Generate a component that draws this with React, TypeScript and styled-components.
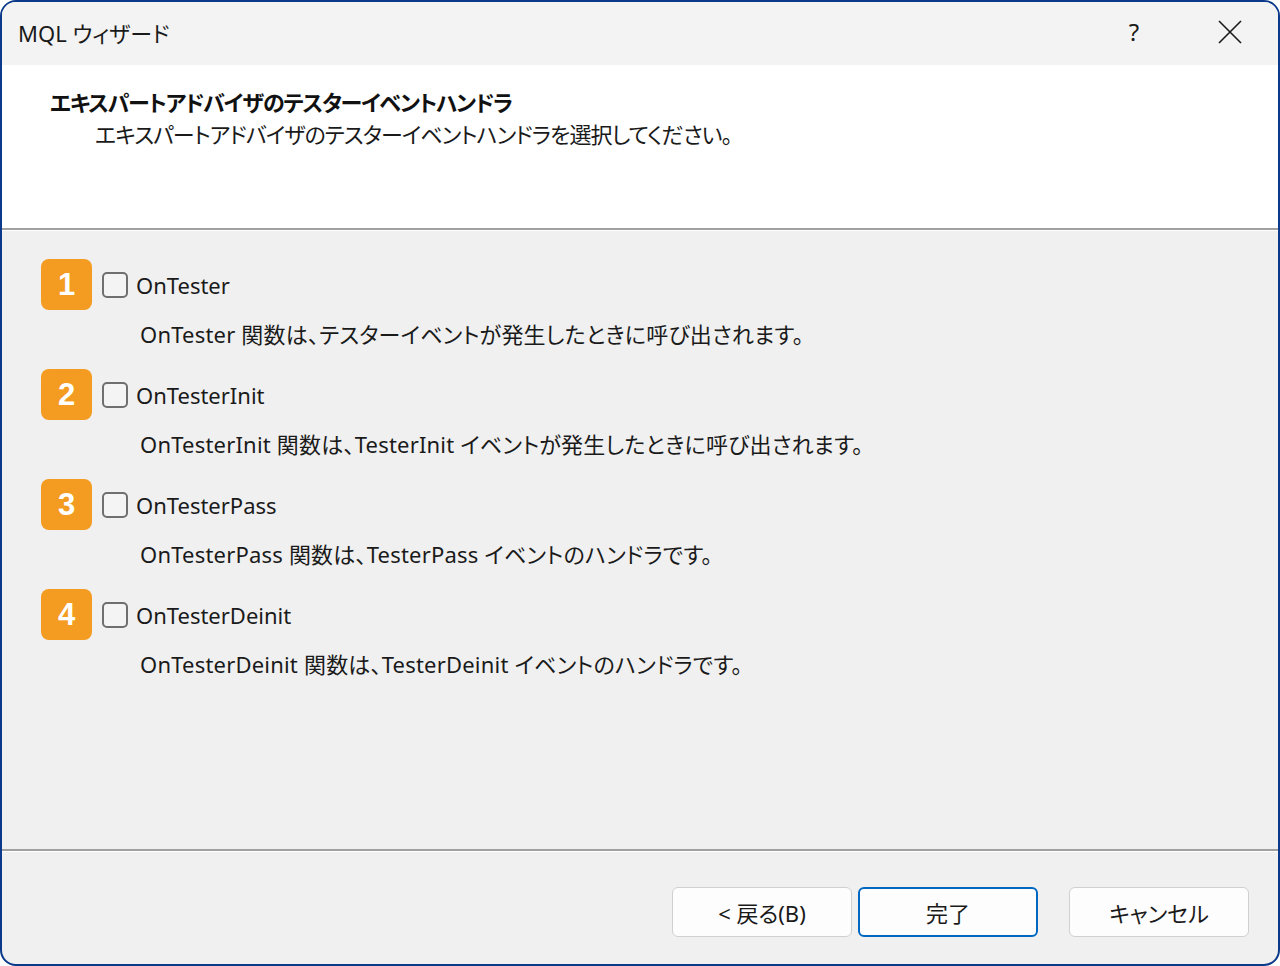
import React from 'react';
import styled, { createGlobalStyle } from 'styled-components';

const GlobalStyle = createGlobalStyle`
  html, body {
    margin: 0;
    padding: 0;
    background: #ffffff;
  }
  * {
    box-sizing: border-box;
  }
`;

const FONT = `"Noto Sans", "Noto Sans CJK JP", sans-serif`;

const Window = styled.div`
  width: 1280px;
  height: 966px;
  border: 2px solid #0c3a8a;
  border-radius: 16px;
  overflow: hidden;
  background: #f0f0f0;
  display: flex;
  flex-direction: column;
  font-family: ${FONT};
  font-feature-settings: 'palt';
  color: #1a1a1a;
`;

const TitleBar = styled.div`
  height: 63px;
  flex: none;
  background: #f3f3f3;
  display: flex;
  align-items: center;
  padding-left: 16px;
`;

const TitleText = styled.div`
  flex: 1;
  font-size: 22px;
  padding-bottom: 4px;
`;

const TitleButton = styled.button`
  width: 96px;
  height: 63px;
  border: none;
  background: transparent;
  padding: 0 0 4px;
  display: flex;
  align-items: center;
  justify-content: center;
  font-family: ${FONT};
  font-size: 24px;
  color: #1a1a1a;
  cursor: default;
`;

const Header = styled.div`
  height: 163px;
  flex: none;
  background: #ffffff;
  padding: 22px 0 0 48px;
`;

const HeaderTitle = styled.div`
  font-size: 22px;
  font-weight: 700;
  line-height: 30px;
  letter-spacing: -1.2px;
  color: #111;
`;

const HeaderSub = styled.div`
  font-size: 22px;
  line-height: 30px;
  letter-spacing: -0.9px;
  padding-left: 45px;
  margin-top: 2px;
`;

const Divider = styled.div`
  flex: none;
  height: 3px;
  border-top: 2px solid #a0a0a0;
  border-bottom: 1px solid #ffffff;
`;

const Body = styled.div`
  flex: 1;
  padding: 28px 0 0 39px;
  display: flex;
  flex-direction: column;
`;

const Item = styled.div`
  display: flex;
  flex-direction: column;
  height: 110px;
`;

const ItemRow = styled.div`
  display: flex;
  align-items: center;
  height: 51px;
`;

const Badge = styled.div`
  width: 51px;
  height: 51px;
  border-radius: 8px;
  background: #f49c21;
  color: #ffffff;
  font-family: "Liberation Sans", Arial, sans-serif;
  font-weight: 700;
  font-size: 31px;
  display: flex;
  align-items: center;
  justify-content: center;
`;

const CheckBox = styled.span`
  width: 26px;
  height: 26px;
  margin-left: 10px;
  border: 2px solid #6f6f6f;
  border-radius: 5px;
  background: #f4f4f4;
`;

const Label = styled.span`
  margin-left: 8px;
  font-size: 22px;
`;

const Description = styled.div`
  padding-left: 99px;
  margin-top: 9px;
  font-size: 22px;
  line-height: 30px;
  letter-spacing: 0.2px;
`;

const Footer = styled.div`
  height: 112px;
  flex: none;
  display: flex;
  align-items: flex-start;
  padding: 35px 0 0 670px;
`;

const Button = styled.button<{ $primary?: boolean; $gap?: number }>`
  width: 180px;
  height: 50px;
  margin-left: ${(p) => p.$gap ?? 0}px;
  border-radius: 6px;
  border: ${(p) => (p.$primary ? '2px solid #0067c0' : '1px solid #d0d0d0')};
  background: #fdfdfd;
  font-family: ${FONT};
  font-feature-settings: 'palt';
  font-size: 22px;
  color: #1a1a1a;
  display: flex;
  align-items: center;
  justify-content: center;
  padding: 0;
`;

const items = [
  {
    n: 1,
    name: 'OnTester',
    desc: 'OnTester 関数は、テスターイベントが発生したときに呼び出されます。',
  },
  {
    n: 2,
    name: 'OnTesterInit',
    desc: 'OnTesterInit 関数は、TesterInit イベントが発生したときに呼び出されます。',
  },
  {
    n: 3,
    name: 'OnTesterPass',
    desc: 'OnTesterPass 関数は、TesterPass イベントのハンドラです。',
  },
  {
    n: 4,
    name: 'OnTesterDeinit',
    desc: 'OnTesterDeinit 関数は、TesterDeinit イベントのハンドラです。',
  },
];

export default function App() {
  return (
    <>
      <GlobalStyle />
      <Window>
        <TitleBar>
          <TitleText>MQL ウィザード</TitleText>
          <TitleButton>?</TitleButton>
          <TitleButton>
            <svg width="24" height="24" viewBox="0 0 24 24">
              <path d="M1 1 L23 23 M23 1 L1 23" stroke="#1a1a1a" strokeWidth="1.6" fill="none" />
            </svg>
          </TitleButton>
        </TitleBar>
        <Header>
          <HeaderTitle>エキスパートアドバイザのテスターイベントハンドラ</HeaderTitle>
          <HeaderSub>エキスパートアドバイザのテスターイベントハンドラを選択してください。</HeaderSub>
        </Header>
        <Divider />
        <Body>
          {items.map((it) => (
            <Item key={it.n}>
              <ItemRow>
                <Badge>{it.n}</Badge>
                <CheckBox />
                <Label>{it.name}</Label>
              </ItemRow>
              <Description>{it.desc}</Description>
            </Item>
          ))}
        </Body>
        <Divider />
        <Footer>
          <Button>&lt; 戻る(B)</Button>
          <Button $primary $gap={6}>完了</Button>
          <Button $gap={31}>キャンセル</Button>
        </Footer>
      </Window>
    </>
  );
}
